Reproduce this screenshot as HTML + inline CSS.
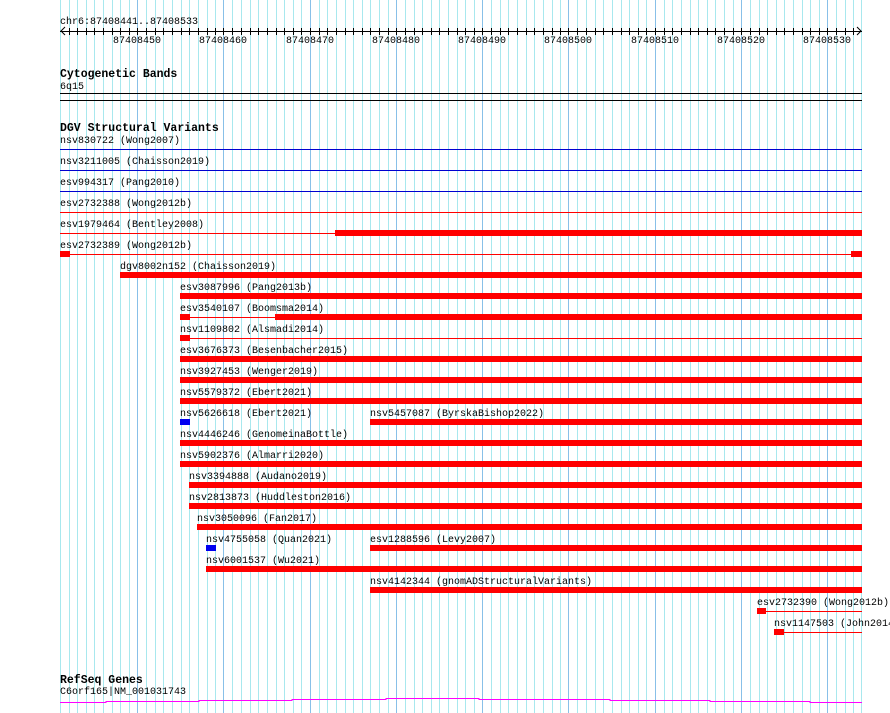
<!DOCTYPE html>
<html><head><meta charset="utf-8"><style>
body{margin:0;width:890px;height:713px;overflow:hidden;background:#fff;position:relative;font-family:"Liberation Mono",monospace;font-size:10px;color:#000}
.t{position:absolute;white-space:nowrap;line-height:12px;margin-top:2px}
.h{font-weight:bold;font-size:11.5px}
.b{position:absolute;height:6px;background:#f00}
.l{position:absolute;height:1px;background:#f00}
svg{position:absolute;left:0;top:0}
</style></head><body>
<svg width="890" height="713" shape-rendering="crispEdges">
<path stroke="#a8e8ee" stroke-width="1" fill="none" d="M60.5 0V713M69.5 0V713M77.5 0V713M86.5 0V713M94.5 0V713M103.5 0V713M112.5 0V713M120.5 0V713M129.5 0V713M146.5 0V713M155.5 0V713M163.5 0V713M172.5 0V713M181.5 0V713M189.5 0V713M198.5 0V713M207.5 0V713M215.5 0V713M232.5 0V713M241.5 0V713M250.5 0V713M258.5 0V713M267.5 0V713M276.5 0V713M284.5 0V713M293.5 0V713M301.5 0V713M319.5 0V713M327.5 0V713M336.5 0V713M345.5 0V713M353.5 0V713M362.5 0V713M370.5 0V713M379.5 0V713M388.5 0V713M405.5 0V713M414.5 0V713M422.5 0V713M431.5 0V713M439.5 0V713M448.5 0V713M457.5 0V713M465.5 0V713M474.5 0V713M491.5 0V713M500.5 0V713M508.5 0V713M517.5 0V713M526.5 0V713M534.5 0V713M543.5 0V713M552.5 0V713M560.5 0V713M577.5 0V713M586.5 0V713M595.5 0V713M603.5 0V713M612.5 0V713M621.5 0V713M629.5 0V713M638.5 0V713M646.5 0V713M664.5 0V713M672.5 0V713M681.5 0V713M690.5 0V713M698.5 0V713M707.5 0V713M715.5 0V713M724.5 0V713M733.5 0V713M750.5 0V713M759.5 0V713M767.5 0V713M776.5 0V713M784.5 0V713M793.5 0V713M802.5 0V713M810.5 0V713M819.5 0V713M836.5 0V713M845.5 0V713M853.5 0V713M861.5 0V713"/>
<path stroke="#88c0e8" stroke-width="1" fill="none" d="M137.5 0V713M223.5 0V713M310.5 0V713M396.5 0V713M482.5 0V713M568.5 0V713M655.5 0V713M741.5 0V713M827.5 0V713"/>
<path stroke="#000" stroke-width="1" fill="none" d="M69.5 28V35M77.5 28V35M86.5 28V35M94.5 28V35M103.5 28V35M112.5 28V35M120.5 28V35M129.5 28V35M137.5 28V35M146.5 28V35M155.5 28V35M163.5 28V35M172.5 28V35M181.5 28V35M189.5 28V35M198.5 28V35M207.5 28V35M215.5 28V35M223.5 28V35M232.5 28V35M241.5 28V35M250.5 28V35M258.5 28V35M267.5 28V35M276.5 28V35M284.5 28V35M293.5 28V35M301.5 28V35M310.5 28V35M319.5 28V35M327.5 28V35M336.5 28V35M345.5 28V35M353.5 28V35M362.5 28V35M370.5 28V35M379.5 28V35M388.5 28V35M396.5 28V35M405.5 28V35M414.5 28V35M422.5 28V35M431.5 28V35M439.5 28V35M448.5 28V35M457.5 28V35M465.5 28V35M474.5 28V35M482.5 28V35M491.5 28V35M500.5 28V35M508.5 28V35M517.5 28V35M526.5 28V35M534.5 28V35M543.5 28V35M552.5 28V35M560.5 28V35M568.5 28V35M577.5 28V35M586.5 28V35M595.5 28V35M603.5 28V35M612.5 28V35M621.5 28V35M629.5 28V35M638.5 28V35M646.5 28V35M655.5 28V35M664.5 28V35M672.5 28V35M681.5 28V35M690.5 28V35M698.5 28V35M707.5 28V35M715.5 28V35M724.5 28V35M733.5 28V35M741.5 28V35M750.5 28V35M759.5 28V35M767.5 28V35M776.5 28V35M784.5 28V35M793.5 28V35M802.5 28V35M810.5 28V35M819.5 28V35M827.5 28V35M836.5 28V35M845.5 28V35M853.5 28V35"/>
<rect x="60" y="31" width="802" height="1" fill="#000"/>
<path d="M65 27 L61 31 L65 35 M857 27 L861 31 L857 35" stroke="#000" fill="none" shape-rendering="auto"/>
<rect x="60" y="93" width="802" height="1" fill="#000"/>
<rect x="60" y="100" width="802" height="1" fill="#000"/>
<path d="M60 702.5H106V701.5H199V700.5H292V699.5H386V698.5H479V699.5H610V700.5H710V701.5H810V702.5H862" stroke="#f0f" fill="none"/>
</svg>
<div class="t" style="left:60px;top:15px">chr6:87408441..87408533</div>
<div class="t" style="left:113px;top:34px">87408450</div>
<div class="t" style="left:199px;top:34px">87408460</div>
<div class="t" style="left:286px;top:34px">87408470</div>
<div class="t" style="left:372px;top:34px">87408480</div>
<div class="t" style="left:458px;top:34px">87408490</div>
<div class="t" style="left:544px;top:34px">87408500</div>
<div class="t" style="left:631px;top:34px">87408510</div>
<div class="t" style="left:717px;top:34px">87408520</div>
<div class="t" style="left:803px;top:34px">87408530</div>
<div class="t h" style="left:60px;top:67px">Cytogenetic Bands</div>
<div class="t" style="left:60px;top:80px">6q15</div>
<div class="t h" style="left:60px;top:121px">DGV Structural Variants</div>
<div class="t h" style="left:60px;top:673px">RefSeq Genes</div>
<div class="t" style="left:60px;top:685px">C6orf165|NM_001031743</div>

<div class="t" style="left:60px;top:134px">nsv830722 (Wong2007)</div><div class="l" style="left:60px;width:802px;top:149px;background:#0000d0"></div>
<div class="t" style="left:60px;top:155px">nsv3211005 (Chaisson2019)</div><div class="l" style="left:60px;width:802px;top:170px;background:#0000d0"></div>
<div class="t" style="left:60px;top:176px">esv994317 (Pang2010)</div><div class="l" style="left:60px;width:802px;top:191px;background:#0000d0"></div>
<div class="t" style="left:60px;top:197px">esv2732388 (Wong2012b)</div><div class="l" style="left:60px;width:802px;top:212px"></div>
<div class="t" style="left:60px;top:218px">esv1979464 (Bentley2008)</div><div class="l" style="left:60px;width:802px;top:233px"></div><div class="b" style="left:335px;width:527px;top:230px"></div>
<div class="t" style="left:60px;top:239px">esv2732389 (Wong2012b)</div><div class="l" style="left:60px;width:802px;top:254px"></div><div class="b" style="left:60px;width:10px;top:251px"></div><div class="b" style="left:851px;width:11px;top:251px"></div>
<div class="t" style="left:120px;top:260px">dgv8002n152 (Chaisson2019)</div><div class="b" style="left:120px;width:742px;top:272px"></div>
<div class="t" style="left:180px;top:281px">esv3087996 (Pang2013b)</div><div class="b" style="left:180px;width:682px;top:293px"></div>
<div class="t" style="left:180px;top:302px">esv3540107 (Boomsma2014)</div><div class="l" style="left:180px;width:682px;top:317px"></div><div class="b" style="left:180px;width:10px;top:314px"></div><div class="b" style="left:275px;width:587px;top:314px"></div>
<div class="t" style="left:180px;top:323px">nsv1109802 (Alsmadi2014)</div><div class="l" style="left:180px;width:682px;top:338px"></div><div class="b" style="left:180px;width:10px;top:335px"></div>
<div class="t" style="left:180px;top:344px">esv3676373 (Besenbacher2015)</div><div class="b" style="left:180px;width:682px;top:356px"></div>
<div class="t" style="left:180px;top:365px">nsv3927453 (Wenger2019)</div><div class="b" style="left:180px;width:682px;top:377px"></div>
<div class="t" style="left:180px;top:386px">nsv5579372 (Ebert2021)</div><div class="b" style="left:180px;width:682px;top:398px"></div>
<div class="t" style="left:180px;top:407px">nsv5626618 (Ebert2021)</div><div class="b" style="left:180px;width:10px;top:419px;background:#0000f0"></div>
<div class="t" style="left:370px;top:407px">nsv5457087 (ByrskaBishop2022)</div><div class="b" style="left:370px;width:492px;top:419px"></div>
<div class="t" style="left:180px;top:428px">nsv4446246 (GenomeinaBottle)</div><div class="b" style="left:180px;width:682px;top:440px"></div>
<div class="t" style="left:180px;top:449px">nsv5902376 (Almarri2020)</div><div class="b" style="left:180px;width:682px;top:461px"></div>
<div class="t" style="left:189px;top:470px">nsv3394888 (Audano2019)</div><div class="b" style="left:189px;width:673px;top:482px"></div>
<div class="t" style="left:189px;top:491px">nsv2813873 (Huddleston2016)</div><div class="b" style="left:189px;width:673px;top:503px"></div>
<div class="t" style="left:197px;top:512px">nsv3050096 (Fan2017)</div><div class="b" style="left:197px;width:665px;top:524px"></div>
<div class="t" style="left:206px;top:533px">nsv4755058 (Quan2021)</div><div class="b" style="left:206px;width:10px;top:545px;background:#0000f0"></div>
<div class="t" style="left:370px;top:533px">esv1288596 (Levy2007)</div><div class="b" style="left:370px;width:492px;top:545px"></div>
<div class="t" style="left:206px;top:554px">nsv6001537 (Wu2021)</div><div class="b" style="left:206px;width:656px;top:566px"></div>
<div class="t" style="left:370px;top:575px">nsv4142344 (gnomADStructuralVariants)</div><div class="b" style="left:370px;width:492px;top:587px"></div>
<div class="t" style="left:757px;top:596px">esv2732390 (Wong2012b)</div><div class="l" style="left:757px;width:105px;top:611px"></div><div class="b" style="left:757px;width:9px;top:608px"></div>
<div class="t" style="left:774px;top:617px">nsv1147503 (John2014)</div><div class="l" style="left:774px;width:88px;top:632px"></div><div class="b" style="left:774px;width:10px;top:629px"></div>
</body></html>
